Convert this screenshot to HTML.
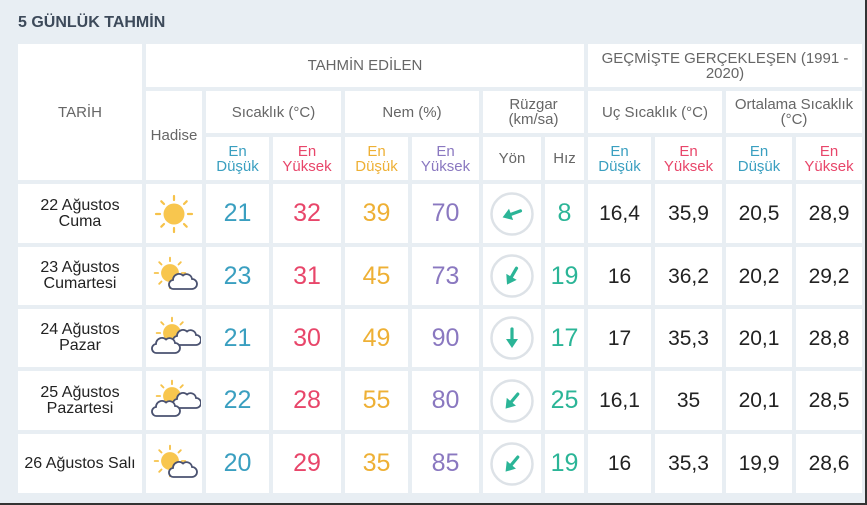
<!DOCTYPE html>
<html><head><meta charset="utf-8"><style>
body{margin:0;width:867px;height:505px;background:#e8eef3;position:relative;overflow:hidden;font-family:"Liberation Sans",sans-serif}
.c{position:absolute;background:#fff;display:flex;align-items:center;justify-content:center;text-align:center;color:#666;font-size:15px;line-height:15px}
.t{position:absolute;left:18px;top:14px;font-weight:bold;font-size:16px;color:#3d4a5a}
.b{color:#3a9fc0}.r{color:#e8466a}.o{color:#eeb035}.p{color:#8a78c0}.g{color:#2bb597}
.n{font-size:25px}.h{font-size:21px;color:#222}.d{font-size:16px;color:#222;line-height:16px}
</style></head><body>
<div class="t">5 GÜNLÜK TAHMİN</div>
<div class="c" style="left:18px;top:44px;width:124px;height:136px">TARİH</div>
<div class="c" style="left:146px;top:44px;width:438px;height:43px">TAHMİN EDİLEN</div>
<div class="c" style="left:588px;top:44px;width:274px;height:43px;line-height:15px">GEÇMİŞTE GERÇEKLEŞEN (1991 -<br>2020)</div>
<div class="c" style="left:146px;top:91px;width:56px;height:89px">Hadise</div>
<div class="c" style="left:206px;top:91px;width:135px;height:42px">Sıcaklık (°C)</div>
<div class="c" style="left:345px;top:91px;width:134px;height:42px">Nem (%)</div>
<div class="c" style="left:483px;top:91px;width:101px;height:42px">Rüzgar<br>(km/sa)</div>
<div class="c" style="left:588px;top:91px;width:134px;height:42px">Uç Sıcaklık (°C)</div>
<div class="c" style="left:726px;top:91px;width:136px;height:42px">Ortalama Sıcaklık<br>(°C)</div>
<div class="c b" style="left:206px;top:137px;width:63px;height:43px">En<br>Düşük</div>
<div class="c r" style="left:273px;top:137px;width:68px;height:43px">En<br>Yüksek</div>
<div class="c o" style="left:345px;top:137px;width:63px;height:43px">En<br>Düşük</div>
<div class="c p" style="left:412px;top:137px;width:67px;height:43px">En<br>Yüksek</div>
<div class="c" style="left:483px;top:137px;width:58px;height:43px">Yön</div>
<div class="c" style="left:545px;top:137px;width:39px;height:43px">Hız</div>
<div class="c b" style="left:588px;top:137px;width:63px;height:43px">En<br>Düşük</div>
<div class="c r" style="left:655px;top:137px;width:67px;height:43px">En<br>Yüksek</div>
<div class="c b" style="left:726px;top:137px;width:66px;height:43px">En<br>Düşük</div>
<div class="c r" style="left:796px;top:137px;width:66px;height:43px">En<br>Yüksek</div>

<svg width="0" height="0" style="position:absolute"><defs>
<g id="sun"><g stroke="#f6c24a" stroke-width="2.2" stroke-linecap="round"><line x1="0" y1="-18" x2="0" y2="-14"/><line x1="0" y1="18" x2="0" y2="14"/><line x1="-18" y1="0" x2="-14" y2="0"/><line x1="18" y1="0" x2="14" y2="0"/><line x1="-12.7" y1="-12.7" x2="-10" y2="-10"/><line x1="12.7" y1="12.7" x2="10" y2="10"/><line x1="-12.7" y1="12.7" x2="-10" y2="10"/><line x1="12.7" y1="-12.7" x2="10" y2="-10"/></g><circle r="10.5" fill="#f8c64e"/></g>
<path id="cl" d="M-9 6 h18 a5 5 0 0 0 0-10 a5.5 5.5 0 0 0-9-3.5 a6 6 0 0 0-10 4.5 a4.5 4.5 0 0 0 1 9z" fill="#fff" stroke="#4a5270" stroke-width="1.8"/>
<g id="arr"><line x1="0" y1="-9" x2="0" y2="4" stroke="#2bb597" stroke-width="3.2" stroke-linecap="round"/><path d="M-6 1 L0 10 L6 1z" fill="#2bb597"/></g>
</defs></svg>

<div class="c d" style="left:18px;top:184px;width:124px;height:59px">22 Ağustos<br>Cuma</div>
<div class="c d" style="left:18px;top:247px;width:124px;height:58px">23 Ağustos<br>Cumartesi</div>
<div class="c d" style="left:18px;top:309px;width:124px;height:58px">24 Ağustos<br>Pazar</div>
<div class="c d" style="left:18px;top:371px;width:124px;height:59px">25 Ağustos<br>Pazartesi</div>
<div class="c d" style="left:18px;top:434px;width:124px;height:59px">26 Ağustos Salı</div>

<div class="c" style="left:146px;top:184px;width:56px;height:59px"><svg width="44" height="44" viewBox="-22 -22 44 44"><use href="#sun"/></svg></div>
<div class="c" style="left:146px;top:247px;width:56px;height:58px"><svg width="50" height="44" viewBox="-22 -22 50 44"><use href="#sun" transform="translate(-1,-3) scale(.85)"/><use href="#cl" transform="translate(12,7)"/></svg></div>
<div class="c" style="left:146px;top:309px;width:56px;height:58px"><svg width="54" height="44" viewBox="-25 -22 54 44"><use href="#sun" transform="translate(0,-5) scale(.85)"/><use href="#cl" transform="translate(15,1)"/><use href="#cl" transform="translate(-6,9)"/></svg></div>
<div class="c" style="left:146px;top:371px;width:56px;height:59px"><svg width="54" height="44" viewBox="-25 -22 54 44"><use href="#sun" transform="translate(0,-5) scale(.85)"/><use href="#cl" transform="translate(15,1)"/><use href="#cl" transform="translate(-6,9)"/></svg></div>
<div class="c" style="left:146px;top:434px;width:56px;height:59px"><svg width="50" height="44" viewBox="-22 -22 50 44"><use href="#sun" transform="translate(-1,-3) scale(.85)"/><use href="#cl" transform="translate(12,7)"/></svg></div>

<div class="c n b" style="left:206px;top:184px;width:63px;height:59px">21</div><div class="c n r" style="left:273px;top:184px;width:68px;height:59px">32</div><div class="c n o" style="left:345px;top:184px;width:63px;height:59px">39</div><div class="c n p" style="left:412px;top:184px;width:67px;height:59px">70</div>
<div class="c n b" style="left:206px;top:247px;width:63px;height:58px">23</div><div class="c n r" style="left:273px;top:247px;width:68px;height:58px">31</div><div class="c n o" style="left:345px;top:247px;width:63px;height:58px">45</div><div class="c n p" style="left:412px;top:247px;width:67px;height:58px">73</div>
<div class="c n b" style="left:206px;top:309px;width:63px;height:58px">21</div><div class="c n r" style="left:273px;top:309px;width:68px;height:58px">30</div><div class="c n o" style="left:345px;top:309px;width:63px;height:58px">49</div><div class="c n p" style="left:412px;top:309px;width:67px;height:58px">90</div>
<div class="c n b" style="left:206px;top:371px;width:63px;height:59px">22</div><div class="c n r" style="left:273px;top:371px;width:68px;height:59px">28</div><div class="c n o" style="left:345px;top:371px;width:63px;height:59px">55</div><div class="c n p" style="left:412px;top:371px;width:67px;height:59px">80</div>
<div class="c n b" style="left:206px;top:434px;width:63px;height:59px">20</div><div class="c n r" style="left:273px;top:434px;width:68px;height:59px">29</div><div class="c n o" style="left:345px;top:434px;width:63px;height:59px">35</div><div class="c n p" style="left:412px;top:434px;width:67px;height:59px">85</div>

<div class="c" style="left:483px;top:184px;width:58px;height:59px"><svg width="46" height="46" viewBox="-23 -23 46 46"><circle r="20.5" fill="none" stroke="#dde2e7" stroke-width="2.5"/><use href="#arr" transform="rotate(70)"/></svg></div>
<div class="c" style="left:483px;top:247px;width:58px;height:58px"><svg width="46" height="46" viewBox="-23 -23 46 46"><circle r="20.5" fill="none" stroke="#dde2e7" stroke-width="2.5"/><use href="#arr" transform="rotate(30)"/></svg></div>
<div class="c" style="left:483px;top:309px;width:58px;height:58px"><svg width="46" height="46" viewBox="-23 -23 46 46"><circle r="20.5" fill="none" stroke="#dde2e7" stroke-width="2.5"/><use href="#arr"/></svg></div>
<div class="c" style="left:483px;top:371px;width:58px;height:59px"><svg width="46" height="46" viewBox="-23 -23 46 46"><circle r="20.5" fill="none" stroke="#dde2e7" stroke-width="2.5"/><use href="#arr" transform="rotate(40)"/></svg></div>
<div class="c" style="left:483px;top:434px;width:58px;height:59px"><svg width="46" height="46" viewBox="-23 -23 46 46"><circle r="20.5" fill="none" stroke="#dde2e7" stroke-width="2.5"/><use href="#arr" transform="rotate(40)"/></svg></div>

<div class="c n g" style="left:545px;top:184px;width:39px;height:59px">8</div>
<div class="c n g" style="left:545px;top:247px;width:39px;height:58px">19</div>
<div class="c n g" style="left:545px;top:309px;width:39px;height:58px">17</div>
<div class="c n g" style="left:545px;top:371px;width:39px;height:59px">25</div>
<div class="c n g" style="left:545px;top:434px;width:39px;height:59px">19</div>

<div class="c h" style="left:588px;top:184px;width:63px;height:59px">16,4</div><div class="c h" style="left:655px;top:184px;width:67px;height:59px">35,9</div><div class="c h" style="left:726px;top:184px;width:66px;height:59px">20,5</div><div class="c h" style="left:796px;top:184px;width:66px;height:59px">28,9</div>
<div class="c h" style="left:588px;top:247px;width:63px;height:58px">16</div><div class="c h" style="left:655px;top:247px;width:67px;height:58px">36,2</div><div class="c h" style="left:726px;top:247px;width:66px;height:58px">20,2</div><div class="c h" style="left:796px;top:247px;width:66px;height:58px">29,2</div>
<div class="c h" style="left:588px;top:309px;width:63px;height:58px">17</div><div class="c h" style="left:655px;top:309px;width:67px;height:58px">35,3</div><div class="c h" style="left:726px;top:309px;width:66px;height:58px">20,1</div><div class="c h" style="left:796px;top:309px;width:66px;height:58px">28,8</div>
<div class="c h" style="left:588px;top:371px;width:63px;height:59px">16,1</div><div class="c h" style="left:655px;top:371px;width:67px;height:59px">35</div><div class="c h" style="left:726px;top:371px;width:66px;height:59px">20,1</div><div class="c h" style="left:796px;top:371px;width:66px;height:59px">28,5</div>
<div class="c h" style="left:588px;top:434px;width:63px;height:59px">16</div><div class="c h" style="left:655px;top:434px;width:67px;height:59px">35,3</div><div class="c h" style="left:726px;top:434px;width:66px;height:59px">19,9</div><div class="c h" style="left:796px;top:434px;width:66px;height:59px">28,6</div>

<div style="position:absolute;left:865px;top:0;width:2px;height:505px;background:#333"></div>
<div style="position:absolute;left:0;top:503px;width:867px;height:2px;background:#333"></div>
</body></html>
